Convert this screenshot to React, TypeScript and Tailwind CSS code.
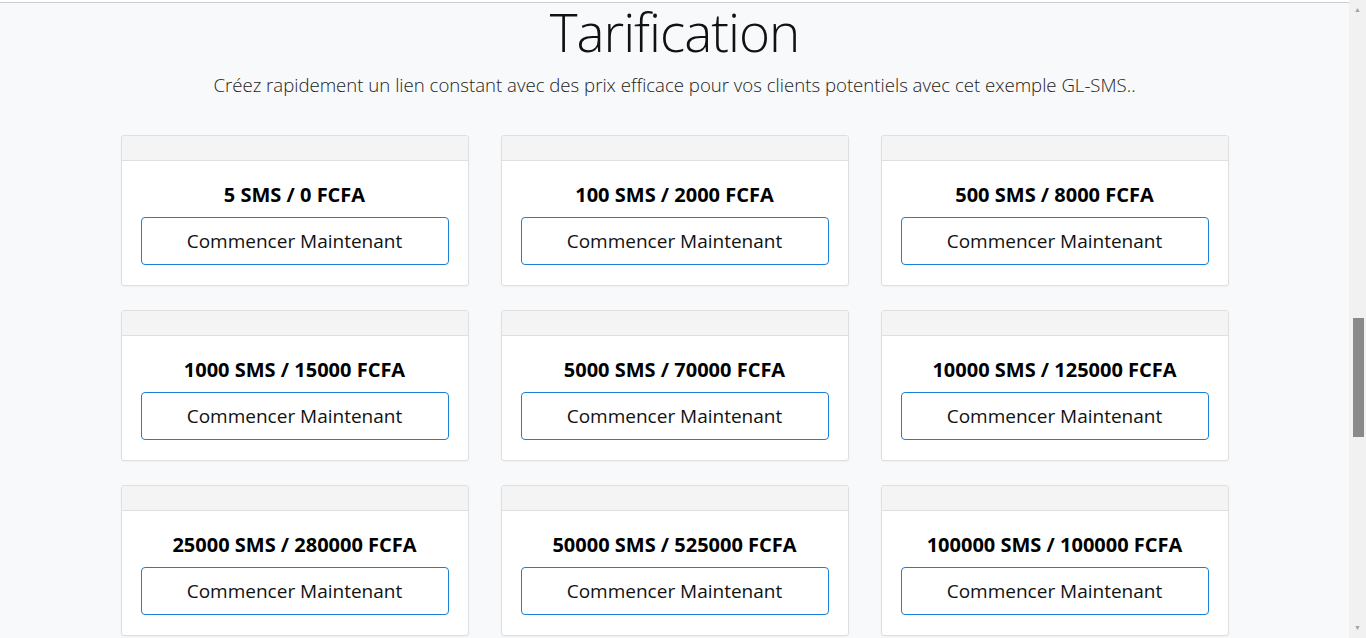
const plans = [
  "5 SMS / 0 FCFA",
  "100 SMS / 2000 FCFA",
  "500 SMS / 8000 FCFA",
  "1000 SMS / 15000 FCFA",
  "5000 SMS / 70000 FCFA",
  "10000 SMS / 125000 FCFA",
  "25000 SMS / 280000 FCFA",
  "50000 SMS / 525000 FCFA",
  "100000 SMS / 100000 FCFA",
];

function PlanCard({ label }: { label: string }) {
  return (
    <div className="bg-white border border-[#dfdfdf] rounded-[3px] shadow-[0_1px_2px_rgba(0,0,0,0.04)] overflow-hidden">
      <div className="h-[25px] bg-[#f4f4f4] border-b border-[#dfdfdf]" />
      <div className="px-[19px] pt-[22px] pb-[20px] text-center">
        <h4 className="text-[20px] leading-[24px] font-bold text-black mb-[10px]">{label}</h4>
        <button className="w-full h-[48px] border border-[#1a7fd6] rounded-[4px] bg-white text-[19px] text-[#111]">
          Commencer Maintenant
        </button>
      </div>
    </div>
  );
}

function Scrollbar() {
  return (
    <div className="w-[17px] bg-[#f1f1f1] flex flex-col items-center pt-[6px]">
      <span className="text-[7px] leading-[8px] text-[#a3a3a3]">▲</span>
      <div className="mt-[304px] w-[11px] h-[119px] bg-[#8a8a8a] ml-[2px]" />
      <div className="flex-1" />
      <span className="text-[7px] leading-[8px] text-[#a3a3a3] mb-[6px]">▼</span>
    </div>
  );
}

export default function App() {
  return (
    <div
      className="h-[638px] w-full flex overflow-hidden bg-[#f8f9fa]"
      style={{ fontFamily: '"Open Sans", "Noto Sans", sans-serif' }}
    >
      <div className="flex-1 flex flex-col">
        <div className="h-[3px] bg-white border-b border-[#cfcfcf]" />
        <h1 className="text-center text-[53px] leading-[52px] font-light text-[#111] tracking-[-1px] mt-[3px]">
          Tarification
        </h1>
        <p className="text-center text-[18.6px] leading-[28px] font-light text-[#222] mt-[13px]">
          Créez rapidement un lien constant avec des prix efficace pour vos clients potentiels avec cet exemple GL-SMS..
        </p>
        <div className="w-[1108px] mx-auto mt-[36px] grid grid-cols-3 gap-x-[32px] gap-y-[24px]">
          {plans.map((p) => (
            <PlanCard key={p} label={p} />
          ))}
        </div>
      </div>
      <Scrollbar />
    </div>
  );
}
